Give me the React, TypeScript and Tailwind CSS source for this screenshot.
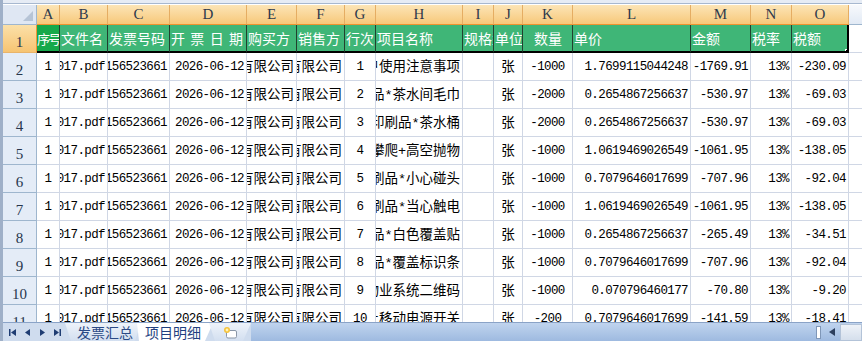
import clsx from 'clsx';

type Align = 'left' | 'center' | 'right' | 'spread';

const LETTERS = ['A', 'B', 'C', 'D', 'E', 'F', 'G', 'H', 'I', 'J', 'K', 'L', 'M', 'N', 'O'];

const HEADERS: { label: string; align: Align }[] = [
  { label: '序号', align: 'left' },
  { label: '文件名', align: 'left' },
  { label: '发票号码', align: 'left' },
  { label: '开票日期', align: 'spread' },
  { label: '购买方', align: 'left' },
  { label: '销售方', align: 'left' },
  { label: '行次', align: 'left' },
  { label: '项目名称', align: 'left' },
  { label: '规格型号', align: 'left' },
  { label: '单位', align: 'left' },
  { label: '数量', align: 'center' },
  { label: '单价', align: 'left' },
  { label: '金额', align: 'left' },
  { label: '税率', align: 'left' },
  { label: '税额', align: 'left' },
];

const ITEMS = [
  { line: 1, name: '*印刷品*客户使用注意事项', qty: '-1000', price: '1.7699115044248', amount: '-1769.91', tax: '-230.09' },
  { line: 2, name: '*印刷品*茶水间毛巾', qty: '-2000', price: '0.2654867256637', amount: '-530.97', tax: '-69.03' },
  { line: 3, name: '*印刷品*茶水桶', qty: '-2000', price: '0.2654867256637', amount: '-530.97', tax: '-69.03' },
  { line: 4, name: '*印刷品*禁止攀爬+高空抛物', qty: '-1000', price: '1.0619469026549', amount: '-1061.95', tax: '-138.05' },
  { line: 5, name: '*印刷品*小心碰头', qty: '-1000', price: '0.7079646017699', amount: '-707.96', tax: '-92.04' },
  { line: 6, name: '*印刷品*当心触电', qty: '-1000', price: '1.0619469026549', amount: '-1061.95', tax: '-138.05' },
  { line: 7, name: '*印刷品*白色覆盖贴', qty: '-1000', price: '0.2654867256637', amount: '-265.49', tax: '-34.51' },
  { line: 8, name: '*印刷品*覆盖标识条', qty: '-1000', price: '0.7079646017699', amount: '-707.96', tax: '-92.04' },
  { line: 9, name: '*印刷品*物业系统二维码', qty: '-1000', price: '0.070796460177', amount: '-70.80', tax: '-9.20' },
  { line: 10, name: '*印刷品*禁止移动电源开关', qty: '-200', price: '0.7079646017699', amount: '-141.59', tax: '-18.41' },
];

function Cell({
  children,
  align = 'right',
  cjk = false,
}: {
  children?: React.ReactNode;
  align?: Align;
  cjk?: boolean;
}) {
  return (
    <div
      className={clsx(
        'flex items-center overflow-hidden whitespace-nowrap border-r border-b border-[#d0d7e5] px-[2px] pt-[2px] text-black',
        align === 'left' && 'justify-start',
        align === 'center' && 'justify-center',
        align === 'right' && 'justify-end',
        cjk ? 'text-[13.5px]' : 'text-[12.5px] tracking-[-0.6px]',
      )}
    >
      <span className="shrink-0">{children}</span>
    </div>
  );
}

function RowHead({ n, selected = false }: { n: number; selected?: boolean }) {
  return (
    <div
      className={clsx(
        "flex items-end justify-center pb-[2px] font-['Liberation_Serif',serif] text-[15px] text-[#27364d]",
        selected
          ? 'border-r border-b border-r-[#f29436] border-b-[#e9b46a] bg-linear-to-b from-[#fbe0a8] to-[#f6c472]'
          : 'border-r border-b border-[#9eb6ce] bg-[#e4ecf7]',
      )}
    >
      {n}
    </div>
  );
}

function NavIcon({ d }: { d: string }) {
  return (
    <svg width="9" height="9" viewBox="0 0 9 9" className="text-[#1f3d73]">
      <path d={d} fill="currentColor" />
    </svg>
  );
}

export default function App() {
  return (
    <div className="flex h-[341px] w-[862px] flex-col overflow-hidden border-l-[3px] border-[#9fb0c8] bg-white leading-none">
      {/* formula bar edge */}
      <div className="h-[3px] bg-[#e6ecf5]" />
      <div className="h-[1px] bg-[#a7b8cf]" />
      <div className="h-[1px] bg-white" />

      {/* sheet grid */}
      <div className="flex-1 overflow-hidden">
        <div className="grid grid-cols-[34px_23px_48px_62px_77px_50px_48px_31px_87px_31px_29px_50px_118px_60px_41px_57px_64px] grid-rows-[20px] auto-rows-[28px] font-['Liberation_Mono','Noto_Sans_CJK_SC',monospace]">
          {/* column headers */}
          <div className="relative border-r border-b border-[#9eb6ce] bg-[#dfe7f3]">
            <div className="absolute right-[3px] bottom-[3px] h-0 w-0 border-b-[10px] border-l-[10px] border-b-[#b6c4d6] border-l-transparent" />
          </div>
          {LETTERS.map((l) => (
            <div
              key={l}
              className="flex items-center justify-center border-r border-b border-r-[#e5ad63] border-b-[#f0922f] bg-linear-to-b from-[#fce5b6] to-[#f7c879] font-['Liberation_Serif',serif] text-[15px] text-[#2f3a4c]"
            >
              {l}
            </div>
          ))}
          <div className="flex items-center justify-center border-r border-b border-[#9eb6ce] bg-linear-to-b from-[#f7f9fc] to-[#e2eaf5] font-['Liberation_Serif',serif] text-[15px] text-[#2f3a4c]">
            P
          </div>

          {/* row 1: table header */}
          <RowHead n={1} selected />
          {HEADERS.map((h, i) => (
            <div
              key={h.label}
              className={clsx(
                "relative flex items-center overflow-hidden whitespace-nowrap border-b-2 border-b-black font-['Noto_Sans_CJK_SC',sans-serif] text-white",
                i === 0 ? 'bg-[#16a94b] text-[13px] tracking-[-1.8px]' : 'bg-[#3fb677] pl-[1px] text-[14px]',
                i === HEADERS.length - 1 ? 'border-r-2 border-r-black' : 'border-r border-r-[#22402f]',
                h.align === 'center' && 'justify-center',
                h.align === 'left' && 'justify-start',
                h.align === 'spread' && 'justify-between px-[3px]',
              )}
            >
              {h.align === 'spread' ? (
                h.label.split('').map((c) => <span key={c}>{c}</span>)
              ) : (
                <span className="shrink-0">{h.label}</span>
              )}
              {i === HEADERS.length - 1 && (
                <div className="absolute right-[-4px] bottom-[-4px] h-[6px] w-[6px] border border-white bg-black" />
              )}
            </div>
          ))}
          <Cell />

          {/* data rows */}
          {ITEMS.map((it, idx) => (
            <div key={it.line} className="contents">
              <RowHead n={idx + 2} />
              <Cell align="center">1</Cell>
              <Cell>发票_26442000000156523661_20260612_0017.pdf</Cell>
              <Cell>26442000000156523661</Cell>
              <Cell>2026-06-12</Cell>
              <Cell cjk>深圳市某某物业管理有限公司</Cell>
              <Cell cjk>深圳市某某印刷有限公司</Cell>
              <Cell align="center">{it.line}</Cell>
              <Cell cjk>{it.name}</Cell>
              <Cell />
              <Cell cjk align="center">
                张
              </Cell>
              <Cell align="center">{it.qty}</Cell>
              <Cell>{it.price}</Cell>
              <Cell>{it.amount}</Cell>
              <Cell>13%</Cell>
              <Cell>{it.tax}</Cell>
              <Cell />
            </div>
          ))}
        </div>
      </div>

      {/* sheet tabs + horizontal scrollbar */}
      <div className="flex h-[19px] border-t border-[#8aa3c7] bg-[#cfdcee]">
        <div className="flex w-[62px] items-center gap-[6px] pl-[5px]">
          <NavIcon d="M1 1h1.5v7H1zM8 1v7L3 4.5z" />
          <NavIcon d="M7 1v7L2 4.5z" />
          <NavIcon d="M2 1v7l5-3.5z" />
          <NavIcon d="M1 1v7l5-3.5zM6.5 1H8v7H6.5z" />
        </div>
        <div className="flex w-[76px] items-center justify-center bg-linear-to-b from-[#eef3fa] to-[#d3dff0] pl-[4px] font-['Noto_Sans_CJK_SC',sans-serif] text-[14px] text-[#2b4a86] [clip-path:polygon(0_0,100%_0,calc(100%-6px)_100%,6px_100%)]">
          发票汇总
        </div>
        <div className="-ml-[4px] flex w-[76px] items-center justify-center bg-white pr-[4px] font-['Noto_Sans_CJK_SC',sans-serif] text-[14px] text-[#1f3f80] [clip-path:polygon(0_0,100%_0,calc(100%-8px)_100%,2px_100%)]">
          项目明细
        </div>
        <div className="-ml-[4px] flex w-[42px] items-center justify-center bg-linear-to-b from-[#eef3fa] to-[#d3dff0] [clip-path:polygon(0_0,100%_0,calc(100%-8px)_100%,6px_100%)]">
          <svg width="16" height="13" viewBox="0 0 16 13">
            <rect x="4.5" y="4.5" width="10" height="7.5" rx="1.5" fill="#fff" stroke="#8a97a8" />
            <circle cx="5" cy="4" r="3" fill="#f6c33b" />
            <circle cx="5" cy="4" r="1.4" fill="#fff3b8" />
          </svg>
        </div>
        <div className="flex-1 bg-linear-to-b from-[#c0d4ee] to-[#9ebae0]" />
        <div className="flex items-center bg-linear-to-b from-[#c0d4ee] to-[#9ebae0] pl-[2px]">
          <div className="h-[13px] w-[5px] border border-[#7f97b8] bg-white" />
          <div className="ml-[4px] flex h-[17px] w-[13px] items-center justify-center">
            <svg width="6" height="8" viewBox="0 0 6 8">
              <path d="M6 0v8L0 4z" fill="#2c3f5e" />
            </svg>
          </div>
          <div className="ml-[2px] h-[17px] w-[22px] border border-[#b3c3d8] bg-linear-to-b from-[#eef2f8] to-[#d5dfec]" />
        </div>
      </div>
    </div>
  );
}
